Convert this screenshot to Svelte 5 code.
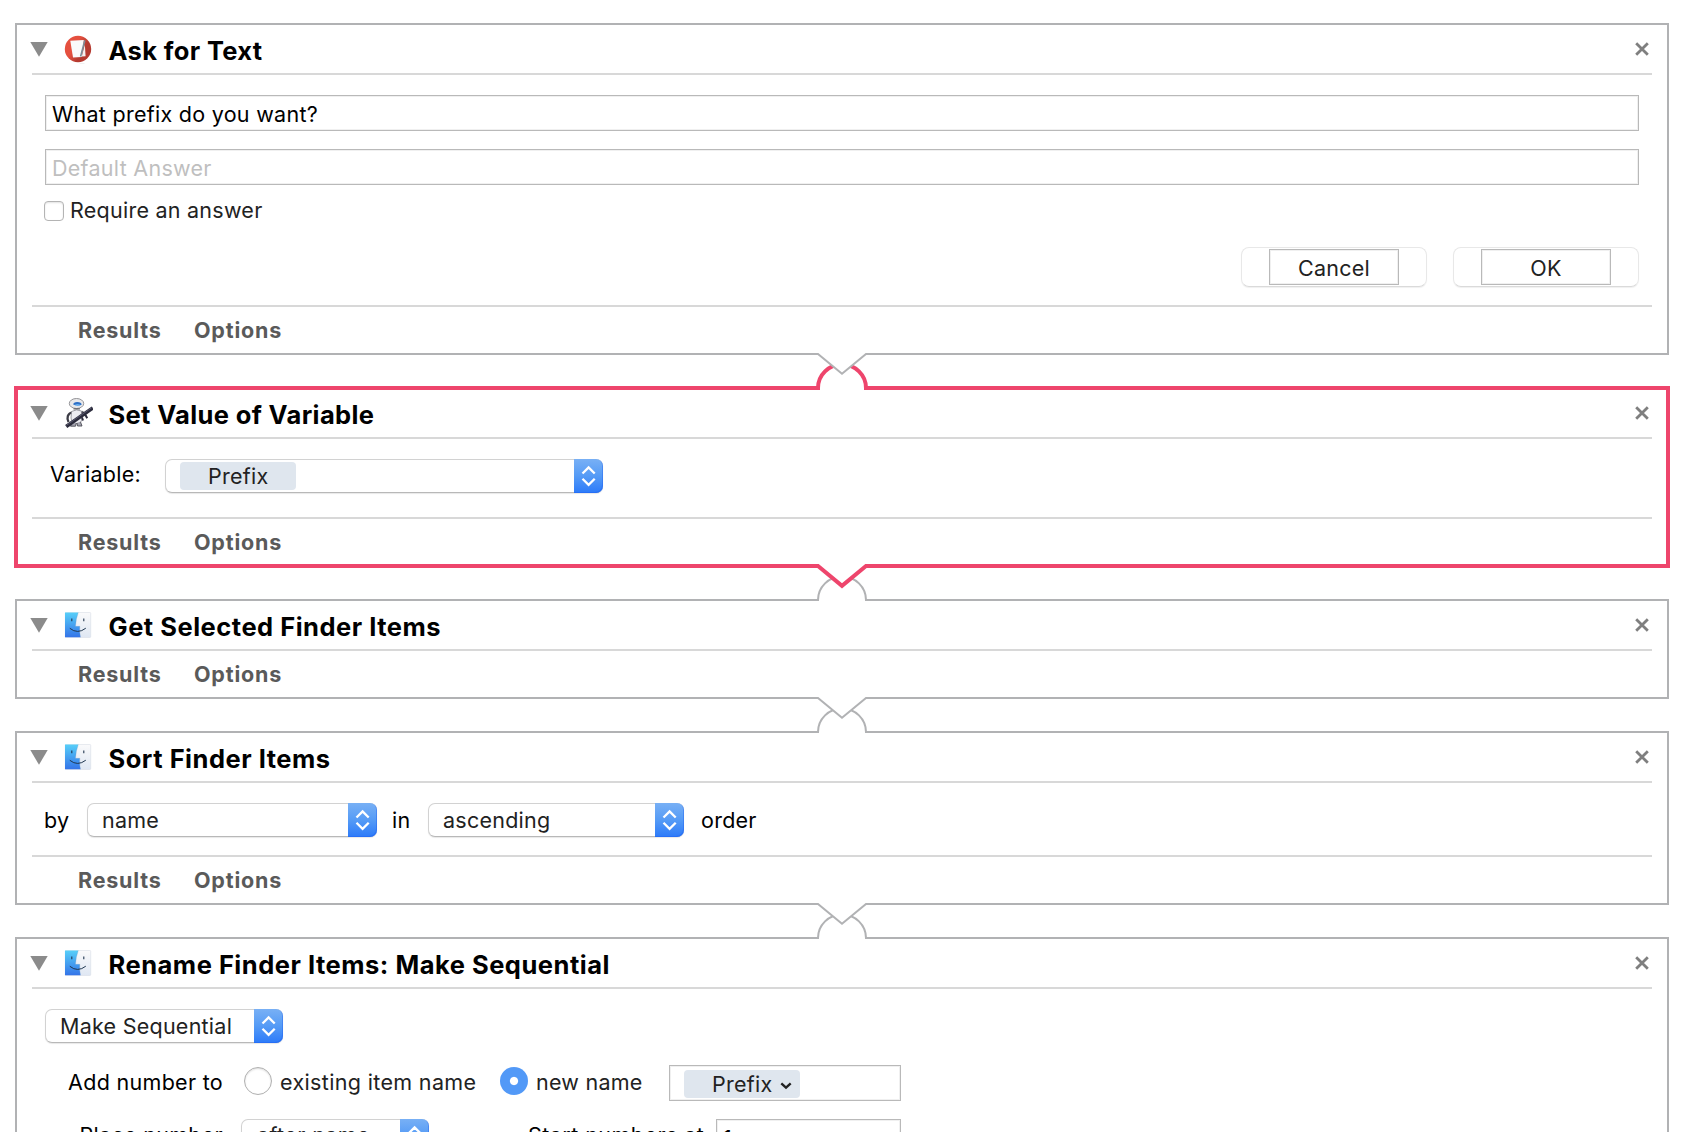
<script>
  let question = $state('What prefix do you want?');
  let required = $state(false);
  let target = $state('new');
</script>

{#snippet textIcon()}
  <svg class="icon" viewBox="0 0 30 30">
    <defs>
      <linearGradient id="disc" x1="0" y1="0" x2="1" y2="0.6">
        <stop offset="0.45" stop-color="#e5503f" />
        <stop offset="0.75" stop-color="#b53a30" />
      </linearGradient>
    </defs>
    <circle cx="15" cy="15" r="13.2" fill="url(#disc)" />
    <path d="M7.3 6.8 20.8 6 18.8 23 10 23.6Z" fill="#fafafa" />
    <path d="M18.8 22.6 21.8 10.5 22.6 22.2Z" fill="#f3f1f0" />
    <path d="M21.8 6.4 17.6 22.5" stroke="#7b8d99" stroke-width="1.6" />
    <path d="M16.5 30h5" stroke="#d8d8d8" stroke-width="0.8" />
  </svg>
{/snippet}

{#snippet robotIcon()}
  <svg class="icon" viewBox="0 0 30 30">
    <path d="M9 14.5C4.5 15.5 3.5 20 5.5 24" fill="none" stroke="#3c3c46" stroke-width="2.3" />
    <path d="M8.5 13.5Q13.5 10.5 18.5 13L19.5 20Q18.5 25.5 13.5 25.5 8.5 25 8 20Z" fill="#ececf1" stroke="#777780" stroke-width="0.7" />
    <path d="M9 25l-1.5 3.2h5l0.8-3M14 25l0.5 3h4.5l-1.5-4" fill="#a5a5b0" stroke="#4c4c56" stroke-width="0.9" />
    <ellipse cx="13.5" cy="5.5" rx="7.2" ry="5" fill="#e8e8ea" stroke="#88888c" stroke-width="0.9" />
    <path d="M10.2 6.6Q10.3 4 14.2 4 18.6 4.1 18.6 6.8 14.2 8.7 10.2 6.6Z" fill="#2d6fc6" />
    <path d="M11.5 6.9Q14.5 5.8 17.8 6.9 14.2 8.2 11.5 6.9Z" fill="#7cc6ff" />
    <path d="M10.5 10.9h6.5" stroke="#55555c" stroke-width="1.1" />
    <path d="M19 13.5 22.5 17.5" stroke="#55555f" stroke-width="2" />
    <path d="M3.2 28.5 29.8 9.9" stroke="#2b2b3c" stroke-width="3.7" />
    <path d="M3.5 27.2 28.5 9.9" stroke="#66667c" stroke-width="0.8" />
    <path d="M22.5 17 24.2 20.2M19 19.5 20 22.5" stroke="#2b2b3c" stroke-width="2" />
  </svg>
{/snippet}

{#snippet finderIcon()}
  <svg class="icon" viewBox="0 0 30 30">
    <defs>
      <linearGradient id="sky" x1="0" y1="0" x2="0" y2="1">
        <stop offset="0" stop-color="#57cff9" />
        <stop offset="1" stop-color="#3474e8" />
      </linearGradient>
      <linearGradient id="fog" x1="0" y1="0" x2="0" y2="1">
        <stop offset="0" stop-color="#fafafb" />
        <stop offset="1" stop-color="#dfe7f3" />
      </linearGradient>
    </defs>
    <rect x="2.3" y="2.5" width="25.4" height="25" rx="0.8" fill="url(#fog)" stroke="#d9dee6" stroke-width="0.6" />
    <path d="M2 2.5H15.3Q12.7 9.5 12.5 16.3H16.8Q16.3 22 17.5 27.3H2Z" fill="url(#sky)" />
    <path d="M15.3 2.5Q12.7 9.5 12.5 16.3H16.8Q16.3 22 17.5 27.3" fill="none" stroke="#7899bd" stroke-opacity="0.45" stroke-width="0.6" />
    <path d="M8.8 8.6v2.7M20.8 8.6v2.7" stroke="#20364f" stroke-width="1.1" />
    <path d="M6.8 18.3Q14.6 24.6 22.8 18.2" fill="none" stroke="#20364f" stroke-width="1" />
  </svg>
{/snippet}

{#snippet header(title, icon, tight = false)}
  <header>
    <svg class="disclosure" viewBox="0 0 18 15"><path d="M0.3 0H17.7L9 14.8Z" fill="#8b8b8b" /></svg>
    {@render icon()}
    <h2 class:tight>{title}</h2>
    <svg class="close" viewBox="0 0 14 14"><path d="M1.2 1.2 12.8 12.8M12.8 1.2 1.2 12.8" stroke="#7f7f7f" stroke-width="2.8" /></svg>
  </header>
{/snippet}

{#snippet footer()}
  <footer><span class="results">Results</span><span>Options</span></footer>
{/snippet}

{#snippet arrows()}
  <span class="arrows">
    <svg viewBox="0 0 29 34"><path d="M8.5 14.5 14.6 8.4 20.7 14.5M8.5 19.7 14.6 25.8 20.7 19.7" fill="none" stroke="#fff" stroke-width="2.3" /></svg>
  </span>
{/snippet}

{#snippet popup(label, size)}
  <div class="popup {size}"><span class="value">{label}</span>{@render arrows()}</div>
{/snippet}

{#snippet connector(kind)}
  <svg class="connector {kind}" viewBox="0 0 60 40">
    <rect x="6" y="32" width="48" height="6" fill="#fff" />
    <path class="socket" d="M6 {kind === 'into-selected' ? 37 : 36}V35A24 23.5 0 0 1 54 35V{kind === 'into-selected' ? 37 : 36}" />
    <path class="mask" d="M6 -1H54V1L30 20.5 6 1Z" />
    <path class="tip" d="M5 1H6L30 20.8 54 1H55" />
  </svg>
{/snippet}

<main>
  <section class="card">
    {@render header('Ask for Text', textIcon, true)}
    <div class="body ask">
      <input class="field" bind:value={question} />
      <input class="field" placeholder="Default Answer" />
      <label class="check"><input type="checkbox" bind:checked={required} /><span>Require an answer</span></label>
      <div class="buttons">
        <div class="button"><span>Cancel</span></div>
        <div class="button"><span>OK</span></div>
      </div>
    </div>
    {@render footer()}
  </section>

  <div class="gap">{@render connector('into-selected')}</div>

  <section class="card selected">
    {@render header('Set Value of Variable', robotIcon, true)}
    <div class="body variable">
      <span class="variable-label">Variable:</span>
      <div class="popup combo"><span class="token">Prefix</span>{@render arrows()}</div>
    </div>
    {@render footer()}
  </section>

  <div class="gap">{@render connector('from-selected')}</div>

  <section class="card">
    {@render header('Get Selected Finder Items', finderIcon)}
    {@render footer()}
  </section>

  <div class="gap">{@render connector('plain')}</div>

  <section class="card">
    {@render header('Sort Finder Items', finderIcon)}
    <div class="body sort">
      <span class="by">by</span>
      {@render popup('name', 'key')}
      <span class="in">in</span>
      {@render popup('ascending', 'direction')}
      <span class="order">order</span>
    </div>
    {@render footer()}
  </section>

  <div class="gap">{@render connector('plain')}</div>

  <section class="card">
    {@render header('Rename Finder Items: Make Sequential', finderIcon)}
    <div class="body rename">
      {@render popup('Make Sequential', 'mode')}
      <div class="row number">
        <span class="lead">Add number to</span>
        <label class="radio existing"><input type="radio" value="existing" bind:group={target} />existing item name</label>
        <label class="radio new"><input type="radio" value="new" bind:group={target} />new name</label>
        <div class="field name-field">
          <span class="token">Prefix<svg viewBox="0 0 12 8"><path d="M1.3 1.3 6 5.7 10.7 1.3" fill="none" stroke="#222" stroke-width="2.3" /></svg></span>
        </div>
      </div>
      <div class="row place">
        <span class="lead">Place number</span>
        {@render popup('after name', 'position')}
        <span class="start">Start numbers at</span>
        <input class="field start-field" value="1" />
      </div>
    </div>
    {@render footer()}
  </section>
</main>

<style>
  :global(body) {
    margin: 0;
    background: #fff;
  }

  main {
    box-sizing: border-box;
    height: 1132px;
    overflow: hidden;
    padding: 23px 15px 0;
    font: 21.5px/34px Inter, 'Liberation Sans', sans-serif;
    letter-spacing: 0.25px;
    color: #000;
    white-space: nowrap;
  }

  .card {
    border: 2px solid #b1b2b4;
    padding: 0 15px;
    background: #fff;
  }

  .selected {
    border-color: #ee456c;
    box-shadow: 0 0 0 1px #ee456c, inset 0 0 0 1px #ee456c;
  }

  .gap {
    display: flex;
    justify-content: center;
    height: 32px;
  }

  /* Spans the bottom edge of one card and the top edge of the next. */
  .connector {
    position: relative;
    top: -2px;
    flex: none;
    width: 60px;
    height: 40px;
    overflow: visible;
  }

  .connector path {
    fill: #fff;
    stroke: #b1b2b4;
    stroke-width: 2;
  }

  .connector .mask {
    stroke: none;
  }

  .into-selected .socket,
  .from-selected .tip {
    stroke: #ee456c;
    stroke-width: 4;
  }

  header {
    display: flex;
    align-items: center;
    height: 48px;
  }

  .disclosure {
    width: 18px;
    height: 15px;
    margin-left: -2px;
  }

  .icon {
    width: 30px;
    height: 30px;
    margin-left: 15px;
  }

  h2 {
    flex: 1;
    margin: 0;
    padding: 4px 0 0 15.5px;
    font-size: 25.5px;
    font-weight: 700;
    line-height: 34px;
    letter-spacing: 0.51px;
  }

  h2.tight {
    letter-spacing: 0.36px;
  }

  .close {
    width: 14px;
    height: 14px;
    margin-right: 3px;
  }

  .body {
    border-top: 2px solid #d8d8d8;
    padding: 20px 13px 18px;
  }

  footer {
    display: flex;
    gap: 32px;
    height: 46px;
    border-top: 2px solid #d8d8d8;
    padding-left: 46px;
    font-size: 21.5px;
    font-weight: 700;
    line-height: 46px;
    letter-spacing: 0.8px;
    color: #5a5a5a;
  }

  .results {
    width: 84px;
  }

  .field {
    box-sizing: border-box;
    display: block;
    width: 100%;
    height: 36px;
    margin: 0;
    border: 1px solid #b9b9b9;
    border-radius: 0;
    box-shadow: inset 0 0 0 1px #f0f0f0;
    background: #fff;
    padding: 2px 6px 0;
    outline: none;
    font: inherit;
    letter-spacing: 0.28px;
    color: #000;
  }

  .field::placeholder {
    color: #bfbfbf;
    opacity: 1;
  }

  .ask .field {
    margin-bottom: 18px;
  }

  .check {
    display: flex;
    align-items: center;
    gap: 6px;
    height: 20px;
    margin-top: -2px;
    margin-left: -1px;
    color: #222;
  }

  .check span {
    padding-bottom: 2px;
  }

  .check input {
    appearance: none;
    box-sizing: border-box;
    width: 20px;
    height: 20px;
    margin: 0;
    border: 1px solid #b4b4b4;
    border-radius: 4px;
    box-shadow: inset 0 1px 2px #e2e2e2;
    background: #fff;
  }

  .buttons {
    display: flex;
    justify-content: flex-end;
    gap: 26px;
    margin-top: 26px;
  }

  .button {
    box-sizing: border-box;
    display: flex;
    justify-content: center;
    width: 186px;
    height: 40px;
    border: 1px solid #e8e8e8;
    border-bottom-color: #dadada;
    border-radius: 8px;
    padding-top: 1px;
    box-shadow: 0 1px 1px #f0f0f0;
  }

  .button span {
    box-sizing: border-box;
    width: 130px;
    height: 36px;
    border: 1px solid #b9b9b9;
    box-shadow: inset 0 0 0 1px #f0f0f0;
    line-height: 37px;
    text-align: center;
    color: #222;
  }

  .popup {
    box-sizing: border-box;
    display: flex;
    justify-content: space-between;
    flex: none;
    height: 34px;
    border: 1px solid #d2d2d2;
    border-bottom-color: #b8b8b8;
    border-radius: 7px;
    box-shadow: 0 1px 1px #e8e8e8;
    background: #fff;
    line-height: 32px;
    color: #222;
  }

  .value {
    padding-left: 14px;
  }

  .arrows {
    width: 29px;
    height: 34px;
    margin: -1px -1px -1px 0;
    border-radius: 0 7px 7px 0;
    background: linear-gradient(#78b0f5, #559bf6 50%, #2c7af9);
    box-shadow: inset -1px -1px 0 rgba(30, 95, 240, 0.4);
  }

  .arrows svg {
    display: block;
    width: 29px;
    height: 34px;
  }

  .token {
    box-sizing: border-box;
    width: 116px;
    height: 28px;
    border-radius: 4px;
    padding-left: 28px;
    background: #dfe6ee;
    line-height: 28px;
    color: #222;
  }

  .variable {
    display: flex;
    padding-bottom: 24px;
  }

  .variable-label {
    width: 115px;
    padding-left: 5px;
    line-height: 30px;
  }

  .combo {
    width: 438px;
  }

  .combo .token {
    margin: 2px 0 0 14px;
  }

  .sort {
    display: flex;
  }

  .by {
    width: 43px;
    margin-left: -1px;
  }

  .key {
    width: 290px;
  }

  .in {
    width: 36px;
    padding-left: 15px;
  }

  .direction {
    width: 256px;
  }

  .order {
    padding-left: 17px;
  }

  .mode {
    width: 238px;
  }

  .row {
    display: flex;
    height: 36px;
  }

  .number {
    margin-top: 22px;
  }

  .place {
    margin-top: 18px;
  }

  .lead {
    width: 178px;
    margin-right: 21px;
    text-align: right;
    letter-spacing: 0.3px;
  }

  .radio {
    display: flex;
    gap: 8px;
    color: #222;
  }

  .radio input {
    appearance: none;
    box-sizing: border-box;
    width: 28px;
    height: 28px;
    margin: 2px 0 0;
    border: 1px solid #b0b0b0;
    border-radius: 50%;
    box-shadow: inset 0 1px 2px #dcdcdc;
    background: #fff;
  }

  .radio input:checked {
    border: none;
    background: radial-gradient(circle, #fff 3.6px, #5299f7 4.6px);
    box-shadow: none;
  }

  .existing {
    width: 256px;
    letter-spacing: 0.35px;
  }

  .new {
    width: 169px;
  }

  .name-field {
    width: 232px;
    padding: 4px 14px 0;
  }

  .name-field .token {
    display: block;
  }

  .token svg {
    width: 12px;
    height: 8px;
    margin: 0 0 2px 7px;
  }

  .place .lead {
    margin-right: 18px;
    line-height: 32px;
  }

  .position {
    width: 188px;
    margin-right: 99px;
    line-height: 30px;
  }

  .position .value {
    padding-left: 15px;
    letter-spacing: 0.4px;
  }

  .start {
    width: 188px;
    line-height: 32px;
    letter-spacing: 0.45px;
  }

  .start-field {
    width: 185px;
  }
</style>
